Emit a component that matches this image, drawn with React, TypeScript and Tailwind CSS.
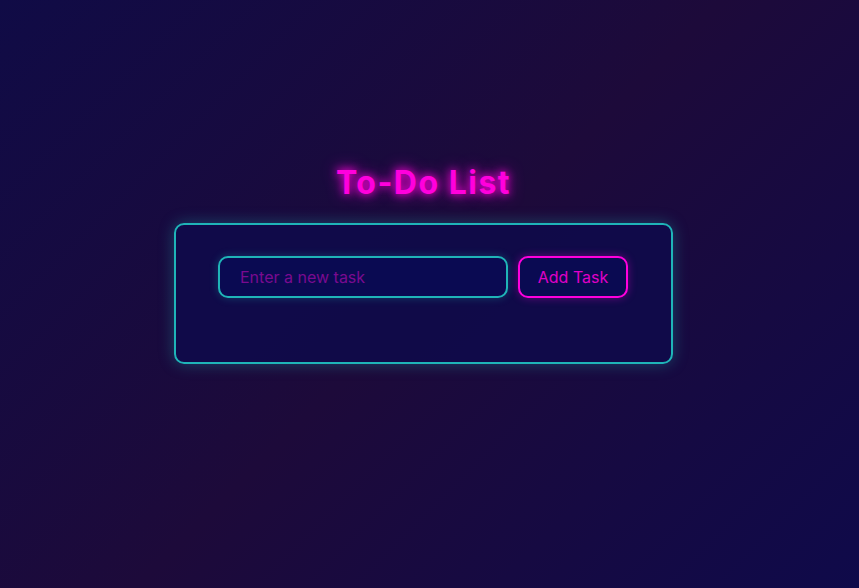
import * as React from "react";

export default function App() {
  const [task, setTask] = React.useState("");

  return (
    <div
      className="flex min-h-screen w-full flex-col items-center bg-[linear-gradient(135deg,#100b46_0%,#1d0a3a_50%,#0f0a4a_100%)] pr-[12px] pt-[163px]"
      style={{ fontFamily: "Inter, 'Noto Sans', sans-serif" }}
    >
      <h1 className="text-[32px] font-bold leading-[40px] tracking-[1.5px] text-[#ff00dd] [text-shadow:0_0_8px_#ff00dd,0_0_16px_#c000b0]">
        To-Do List
      </h1>
      <div className="mt-[20px] h-[141px] w-[499px] rounded-[10px] border-2 border-[#1fb4b8] bg-[#100a4a]/90 px-[42px] pt-[31px] shadow-[0_0_15px_rgba(31,180,184,0.35)]">
        <div className="flex gap-[10px]">
          <input
            value={task}
            onChange={(e) => setTask(e.target.value)}
            placeholder="Enter a new task"
            className="h-[42px] w-[290px] rounded-[10px] border-2 border-[#1fb4b8] bg-[#0a0a52] px-[20px] text-[16px] text-[#ff00dd] outline-none placeholder:text-[#7a0a90] shadow-[0_0_8px_rgba(31,180,184,0.3)]"
          />
          <button
            type="button"
            className="h-[42px] w-[110px] rounded-[10px] border-2 border-[#ff00dd] bg-[#0a0a52] text-[16px] text-[#e000c8] shadow-[0_0_8px_rgba(255,0,221,0.35)]"
          >
            Add Task
          </button>
        </div>
      </div>
    </div>
  );
}
